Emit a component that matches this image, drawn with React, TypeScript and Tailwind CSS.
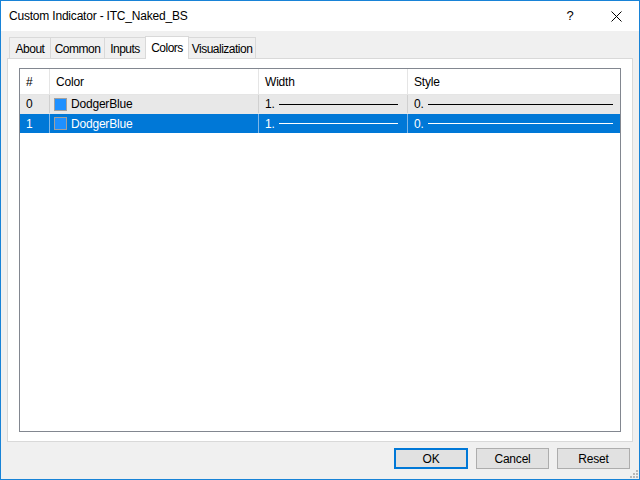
import React from 'react';

const tabs = [
  { name: 'About', w: 'w-[42px]' },
  { name: 'Common', w: 'w-[55px]' },
  { name: 'Inputs', w: 'w-[42px]' },
  { name: 'Colors', w: 'w-[44px]' },
  { name: 'Visualization', w: 'w-[68px]' },
];

const rows = [
  { id: '0', color: 'DodgerBlue', width: '1.', style: '0.' },
  { id: '1', color: 'DodgerBlue', width: '1.', style: '0.' },
];

export default function App() {
  return (
    <div
      className="w-[640px] h-[480px] flex flex-col border border-[#1883d7] bg-[#f0f0f0] text-[12px] text-black overflow-hidden tracking-[-0.2px]"
      style={{ fontFamily: '"Liberation Sans", Arial, sans-serif' }}
    >
      {/* title bar */}
      <div className="h-[30px] bg-white flex items-center pl-[8px] shrink-0">
        <span className="flex-1 text-[12px]">Custom Indicator - ITC_Naked_BS</span>
        <span className="w-[46px] text-center text-[13px]">?</span>
        <span className="w-[46px] flex justify-center">
          <svg width="11" height="11" viewBox="0 0 11 11">
            <path d="M0.5 0.5 L10.5 10.5 M10.5 0.5 L0.5 10.5" stroke="#000" strokeWidth="1" />
          </svg>
        </span>
      </div>

      <div className="flex-1 flex flex-col pt-[5px] pl-[6px] pr-[6px] relative">
        {/* tabs */}
        <div className="h-[22px] flex items-end pl-[2px] relative z-10">
          {tabs.map((t) =>
            t.name === 'Colors' ? (
              <div
                key={t.name}
                className={t.w + ' h-[23px] -mb-px -ml-px bg-white border border-[#d9d9d9] border-b-0 flex justify-center items-start pt-[2px] tracking-[-0.5px]'}
              >
                {t.name}
              </div>
            ) : (
              <div
                key={t.name}
                className={t.w + ' h-[21px] bg-[#f0f0f0] border border-[#d9d9d9] border-b-0 -ml-px first:ml-0 flex justify-center items-center pt-[2px] tracking-[-0.5px] whitespace-nowrap'}
              >
                {t.name}
              </div>
            )
          )}
        </div>

        {/* panel */}
        <div className="h-[384px] bg-white border border-[#d9d9d9] pt-[9px] pb-[9px] px-[11px] flex">
          <div className="flex-1 border border-[#828790] bg-white flex flex-col">
            <div className="h-[26px] flex border-b border-[#e5e5e5]">
              <div className="w-[30px] border-r border-[#e5e5e5] pl-[6px] flex items-center">#</div>
              <div className="w-[209px] border-r border-[#e5e5e5] pl-[6px] flex items-center">Color</div>
              <div className="w-[149px] border-r border-[#e5e5e5] pl-[6px] flex items-center">Width</div>
              <div className="flex-1 pl-[6px] flex items-center">Style</div>
            </div>
            {rows.map((r, i) => {
              const sel = i === 1;
              return (
                <div
                  key={r.id}
                  className={
                    sel
                      ? 'h-[19px] flex bg-[#0078d7] text-white'
                      : 'h-[19px] flex bg-[#e8e8e8] text-black border-b border-[#e8e8e8]'
                  }
                >
                  <div className={'w-[30px] border-r pl-[6px] flex items-center ' + (sel ? 'border-[#7fb7e8]' : 'border-[#d0d0d0]')}>
                    {r.id}
                  </div>
                  <div className={'w-[209px] border-r pl-[4px] flex items-center gap-[4px] ' + (sel ? 'border-[#7fb7e8]' : 'border-[#d0d0d0]')}>
                    <span className="w-[13px] h-[13px] bg-[#1e90ff] border border-[#a0a0a0] shrink-0" />
                    {r.color}
                  </div>
                  <div className={'w-[149px] border-r pl-[6px] pr-[9px] flex items-center gap-[4px] ' + (sel ? 'border-[#7fb7e8]' : 'border-[#d0d0d0]')}>
                    <span>{r.width}</span>
                    <span className={'flex-1 h-px ' + (sel ? 'bg-white' : 'bg-black')} />
                  </div>
                  <div className="flex-1 pl-[6px] pr-[7px] flex items-center gap-[4px]">
                    <span>{r.style}</span>
                    <span className={'flex-1 h-px ' + (sel ? 'bg-white' : 'bg-black')} />
                  </div>
                </div>
              );
            })}
          </div>
        </div>

        {/* buttons */}
        <div className="mt-[6px] flex justify-end gap-[8px] pr-[3px]">
          <button className="w-[74px] h-[21px] bg-[#e1e1e1] border-2 border-[#0078d7] text-[12px] leading-none">OK</button>
          <button className="w-[73px] h-[21px] bg-[#e1e1e1] border border-[#adadad] text-[12px] leading-none">Cancel</button>
          <button className="w-[73px] h-[21px] bg-[#e1e1e1] border border-[#adadad] text-[12px] leading-none">Reset</button>
        </div>

        {/* size grip */}
        <svg className="absolute right-[1px] bottom-[1px]" width="10" height="10" viewBox="0 0 10 10">
          {[
            [8, 2], [8, 5], [8, 8], [5, 5], [5, 8], [2, 8],
          ].map(([x, y]) => (
            <rect key={`${x}-${y}`} x={x} y={y} width="2" height="2" fill="#b8b8b8" />
          ))}
        </svg>
      </div>
    </div>
  );
}
